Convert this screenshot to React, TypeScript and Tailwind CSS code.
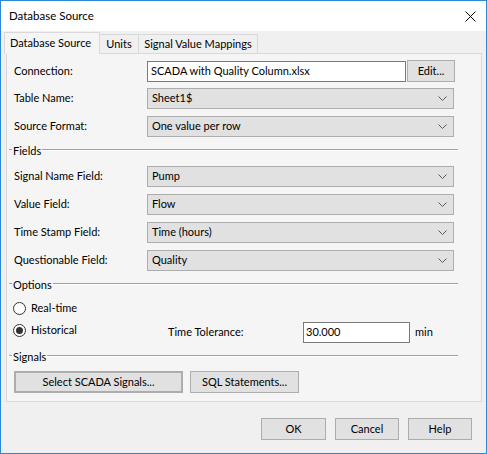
import React from "react";

const font = { fontFamily: 'Lato, Roboto, "Liberation Sans", Arial, sans-serif' };

function Chevron() {
  return (
    <svg width="9" height="5" viewBox="0 0 9 5" className="shrink-0">
      <path d="M0.5 0.5 L4.5 4.5 L8.5 0.5" fill="none" stroke="#5a5a5a" strokeWidth="1" />
    </svg>
  );
}

function Label({ children }: { children: React.ReactNode }) {
  return <div className="w-[133px] shrink-0 text-[11px] text-black">{children}</div>;
}

function Dropdown({ value }: { value: string }) {
  return (
    <div className="w-[307px] h-[21px] flex items-center justify-between pl-[4px] pr-[6px] bg-[#e1e1e1] border border-[#adadad] text-[11px] text-black">
      <span>{value}</span>
      <Chevron />
    </div>
  );
}

function FieldRow({ label, value, className = "" }: { label: string; value: string; className?: string }) {
  return (
    <div className={`flex items-center ml-[7px] ${className}`}>
      <Label>{label}</Label>
      <Dropdown value={value} />
    </div>
  );
}

function Group({ title, className = "" }: { title: string; className?: string }) {
  return (
    <div className={`flex items-center h-[14px] ml-[2px] w-[449px] ${className}`}>
      <div className="w-[3px] h-[2px] border-t border-[#a0a0a0] border-b border-b-white" />
      <span className="px-[1px] text-[11px] text-black leading-none">{title}</span>
      <div className="flex-1 h-[2px] border-t border-[#a0a0a0] border-b border-b-white" />
    </div>
  );
}

function Radio({ label, checked }: { label: string; checked?: boolean }) {
  return (
    <div className="flex items-center gap-[5px]">
      <div className="w-[13px] h-[13px] rounded-full border border-[#333] bg-white flex items-center justify-center">
        {checked && <div className="w-[7px] h-[7px] rounded-full bg-[#333]" />}
      </div>
      <span className="text-[11px] text-black">{label}</span>
    </div>
  );
}

function Button({ children, className = "" }: { children: React.ReactNode; className?: string }) {
  return (
    <div
      className={`h-[22px] flex items-center justify-center bg-[#e1e1e1] border border-[#adadad] text-[11px] text-black whitespace-nowrap ${className}`}
    >
      {children}
    </div>
  );
}

export default function App() {
  return (
    <div style={font} className="w-[487px] h-[454px] flex flex-col border border-[#2b88d8] bg-[#f0f0f0] overflow-hidden">
      {/* title bar */}
      <div className="h-[30px] shrink-0 bg-white flex items-center justify-between pl-[8px] pr-[10px]">
        <span className="text-[11.5px] text-black">Database Source</span>
        <svg width="11" height="11" viewBox="0 0 11 11">
          <path d="M0.5 0.5 L10.5 10.5 M10.5 0.5 L0.5 10.5" stroke="#000" strokeWidth="1" />
        </svg>
      </div>

      {/* tabs */}
      <div className="flex items-end h-[22px] pl-[3px] pt-[1px] whitespace-nowrap">
        <div className="relative z-10 -mb-px h-[22px] w-[96px] flex items-center pl-[5px] bg-[#f5f5f5] border border-b-0 border-[#d9d9d9] text-[11px] text-black">
          Database Source
        </div>
        <div className="h-[19px] w-[39px] flex items-center justify-center bg-[#f0f0f0] border border-b-0 border-l-0 border-[#d9d9d9] text-[11px] text-black">
          Units
        </div>
        <div className="h-[19px] w-[119px] flex items-center justify-center bg-[#f0f0f0] border border-b-0 border-l-0 border-[#d9d9d9] text-[11px] text-black">
          Signal Value Mappings
        </div>
      </div>

      {/* tab page */}
      <div className="ml-[5px] w-[476px] h-[349px] bg-[#f5f5f5] border border-[#d9d9d9] flex flex-col pt-[6px]">
        <div className="flex items-center ml-[7px]">
          <Label>Connection:</Label>
          <div className="w-[259px] h-[21px] flex items-center pl-[3px] bg-white border border-[#7a7a7a] text-[11px] text-black">
            SCADA with Quality Column.xlsx
          </div>
          <Button className="w-[48px] h-[21px] ml-[1px]">Edit...</Button>
        </div>
        <FieldRow label="Table Name:" value="Sheet1$" className="mt-[6px]" />
        <FieldRow label="Source Format:" value="One value per row" className="mt-[7px]" />

        <Group title="Fields" className="mt-[6px]" />
        <FieldRow label="Signal Name Field:" value="Pump" className="mt-[9px]" />
        <FieldRow label="Value Field:" value="Flow" className="mt-[7px]" />
        <FieldRow label="Time Stamp Field:" value="Time (hours)" className="mt-[7px]" />
        <FieldRow label="Questionable Field:" value="Quality" className="mt-[7px]" />

        <Group title="Options" className="mt-[6px]" />
        <div className="ml-[6px] mt-[9px] h-[16px] flex items-center">
          <Radio label="Real-time" />
        </div>
        <div className="ml-[6px] mt-[6px] h-[21px] flex items-center">
          <div className="w-[155px] -mt-[5px]">
            <Radio label="Historical" checked />
          </div>
          <span className="w-[135px] text-[11px] text-black">Time Tolerance:</span>
          <div className="w-[107px] h-[21px] flex items-center pl-[2px] bg-white border border-[#7a7a7a] text-[11px] text-black">
            30.000
          </div>
          <span className="ml-[5px] text-[11px] text-black">min</span>
        </div>

        <Group title="Signals" className="mt-[6px]" />
        <div className="ml-[7px] mt-[8px] flex items-center gap-[7px]">
          <Button className="w-[169px] border-2 border-[#0078d7]">Select SCADA Signals...</Button>
          <Button className="w-[109px]">SQL Statements...</Button>
        </div>
      </div>

      {/* dialog buttons */}
      <div className="flex justify-end gap-[9px] pr-[14px] mt-[16px]">
        <Button className="w-[65px]">OK</Button>
        <Button className="w-[64px]">Cancel</Button>
        <Button className="w-[64px]">Help</Button>
      </div>
    </div>
  );
}
